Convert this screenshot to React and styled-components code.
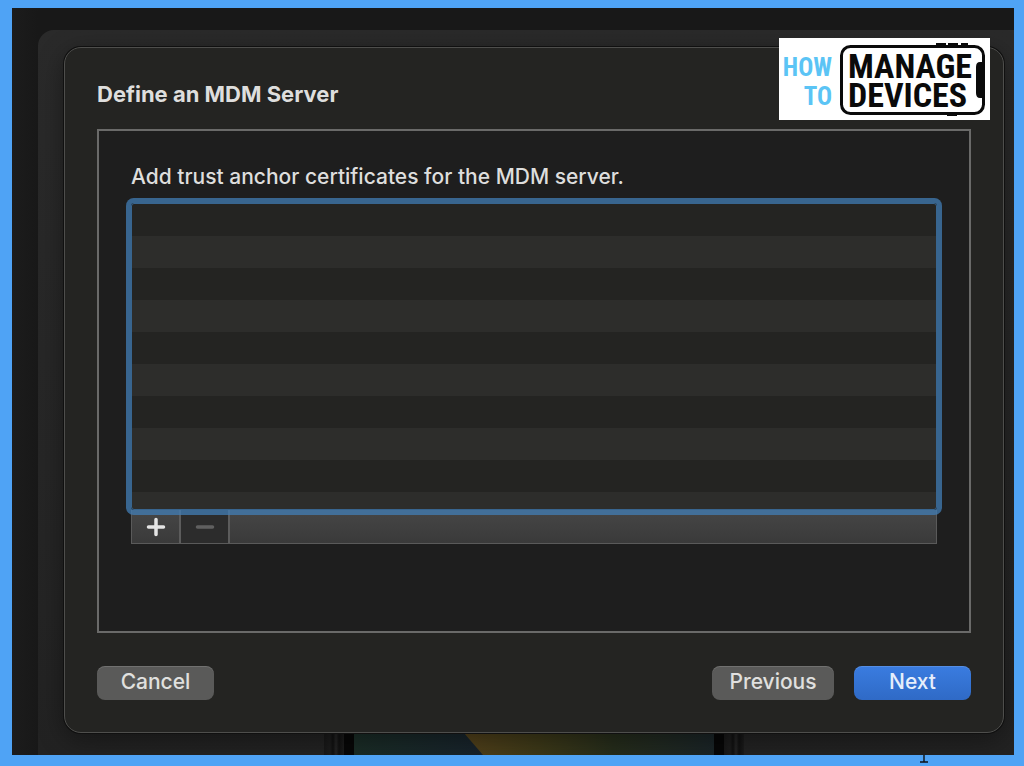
import styled, { createGlobalStyle } from "styled-components";

const GlobalStyle = createGlobalStyle`
  * {
    box-sizing: border-box;
  }
  body {
    margin: 0;
    font-family: Inter, "Liberation Sans", sans-serif;
    font-size: 21px;
    font-weight: 500;
    line-height: 28px;
    color: #dededd;
  }
`;

const Frame = styled.div`
  position: relative;
  display: flex;
  min-height: 100vh;
  padding: 8px 10px 11px 12px;
  background-color: #4fa3f5;
`;

const Desktop = styled.div`
  display: flex;
  flex: 1;
  min-width: 0;
  padding: 22px 0 0 26px;
  background: linear-gradient(90deg, #1c1c1c, #181818 26px);
  overflow: hidden;
`;

const BackWindow = styled.div`
  display: flex;
  flex: 1;
  flex-direction: column;
  min-width: 0;
  padding: 17px 10px 0 26px;
  border-top-left-radius: 16px;
  background: linear-gradient(180deg, #2a2a2a, #262626 60%, #222222);
  overflow: hidden;
`;

const Sheet = styled.main`
  position: relative;
  display: flex;
  flex: 1;
  flex-direction: column;
  padding: 32px;
  border: 1px solid #4e4e4c;
  border-radius: 17px;
  background-color: #242422;
  box-shadow: 0 0 0 1px #101010, 0 6px 26px rgba(0, 0, 0, 0.4);
`;

const Title = styled.h1`
  margin: 0 0 21px;
  font-size: 22px;
  font-weight: 700;
  line-height: 28px;
`;

const Panel = styled.section`
  display: flex;
  flex: 1;
  flex-direction: column;
  padding: 32px 32px 87px;
  border: 2px solid #6a6a69;
  background-color: #1e1e1e;
`;

const Label = styled.h2`
  margin: 0 0 12px;
  font-size: 21px;
  font-weight: 500;
  line-height: 28px;
`;

const CertificateList = styled.div`
  position: relative;
  z-index: 1;
  flex: 1;
  min-height: 160px;
  border: 1px solid #38658f;
  border-radius: 3px;
  background: repeating-linear-gradient(
    180deg,
    #242422 0 32px,
    #2d2d2b 32px 64px
  );
  outline: none;
  box-shadow: 0 0 0 5px rgba(65, 125, 181, 0.75);
`;

const ListToolbar = styled.div`
  display: flex;
  height: 34px;
  border: 1px solid #5a5a5a;
  border-top: 0;
  background: linear-gradient(180deg, #464646, #3a3a3a);
`;

const ToolButton = styled.button`
  display: flex;
  align-items: center;
  justify-content: center;
  width: 49px;
  padding: 0;
  border: 0;
  border-right: 2px solid #5c5c5c;
  background: ${(props) => (props.disabled ? "#2c2c2c" : "transparent")};
  color: ${(props) => (props.disabled ? "#606060" : "#e4e4e4")};
`;

const Actions = styled.footer`
  display: flex;
  gap: 20px;
  margin-top: 33px;
`;

const Button = styled.button`
  min-width: ${(props) => (props.$wide ? "122px" : "117px")};
  height: 34px;
  padding: 0 16px 2px;
  border: 0;
  border-radius: 8px;
  background: ${(props) =>
    props.$primary ? "linear-gradient(180deg, #3a7ce0, #2f6ac6)" : "#5a5a59"};
  box-shadow: inset 0 1px 0 rgba(255, 255, 255, 0.14);
  color: ${(props) => (props.$primary ? "#e6eefb" : "#e0e0df")};
  font: inherit;
`;

const Spacer = styled.div`
  flex: 1;
`;

const Phone = styled.div`
  display: flex;
  align-self: center;
  width: 420px;
  height: 22px;
`;

const PhoneEdge = styled.div`
  width: 20px;
  background: linear-gradient(
    90deg,
    #181818,
    #1c1c1c 30%,
    #101010 45%,
    #242424 60%,
    #111 75%,
    #1c1c1c
  );
`;

const PhoneBezel = styled.div`
  width: 10px;
  background-color: #070707;
`;

const PhoneScreen = styled.svg`
  flex: 1;
  min-width: 0;
  height: 22px;
`;

const Logo = styled.svg`
  position: absolute;
  top: 38px;
  right: 34px;
  width: 211px;
  height: 82px;
  font-family: "Roboto Condensed", "Liberation Sans Narrow", sans-serif;
  font-weight: 700;
`;

const TextCursor = styled.svg`
  position: absolute;
  right: 95px;
  bottom: 3px;
  width: 10px;
  height: 8px;
`;

function HowToLogo() {
  return (
    <Logo viewBox="0 0 211 82" role="img" aria-label="How to manage devices">
      <rect width="211" height="82" fill="#fff" />
      <g fill="#5bc4f5" fontSize="25" textAnchor="end">
        <text x="53" y="38">HOW</text>
        <text x="53" y="67">TO</text>
      </g>
      <rect
        x="62.5"
        y="8.5"
        width="142"
        height="67"
        rx="9"
        fill="none"
        stroke="#0a0a0a"
        strokeWidth="3"
      />
      <path d="M157 6h10M169 6h10M182 6h7M168 77h10" stroke="#0a0a0a" strokeWidth="2" />
      <path d="M205 24h-4q-4 0-4 5v26q0 5 4 5h4z" fill="#0a0a0a" />
      <g fill="#0a0a0a" fontSize="34">
        <text x="69" y="40">MANAGE</text>
        <text x="69" y="69">DEVICES</text>
      </g>
    </Logo>
  );
}

export default function App() {
  return (
    <>
      <GlobalStyle />
      <Frame>
        <Desktop>
          <BackWindow>
            <Sheet>
              <Title>Define an MDM Server</Title>
              <Panel>
                <Label id="certificates">
                  Add trust anchor certificates for the MDM server.
                </Label>
                <CertificateList
                  role="listbox"
                  aria-labelledby="certificates"
                  tabIndex={0}
                />
                <ListToolbar>
                  <ToolButton type="button" aria-label="Add certificate">
                    <svg width="20" height="20" viewBox="0 0 20 20">
                      <path
                        d="M10 2.5v15M2.5 10h15"
                        stroke="currentColor"
                        strokeWidth="3.5"
                        strokeLinecap="round"
                      />
                    </svg>
                  </ToolButton>
                  <ToolButton type="button" aria-label="Remove certificate" disabled>
                    <svg width="20" height="20" viewBox="0 0 20 20">
                      <path
                        d="M2.5 10h15"
                        stroke="currentColor"
                        strokeWidth="3.5"
                        strokeLinecap="round"
                      />
                    </svg>
                  </ToolButton>
                </ListToolbar>
              </Panel>
              <Actions>
                <Button type="button">Cancel</Button>
                <Spacer />
                <Button type="button" $wide>
                  Previous
                </Button>
                <Button type="button" $primary>
                  Next
                </Button>
              </Actions>
            </Sheet>
            <Phone>
              <PhoneEdge />
              <PhoneBezel />
              <PhoneScreen viewBox="0 0 360 22" preserveAspectRatio="none">
                <defs>
                  <linearGradient id="teal">
                    <stop offset="0" stopColor="#1a2c26" />
                    <stop offset="1" stopColor="#17222b" />
                  </linearGradient>
                  <linearGradient id="gold">
                    <stop offset="0" stopColor="#51401a" />
                    <stop offset="0.3" stopColor="#3c3818" />
                    <stop offset="0.6" stopColor="#252c1b" />
                    <stop offset="1" stopColor="#1a2427" />
                  </linearGradient>
                </defs>
                <rect width="130" height="22" fill="url(#teal)" />
                <path d="M110 0h250v22H129z" fill="url(#gold)" />
              </PhoneScreen>
              <PhoneBezel />
              <PhoneEdge />
            </Phone>
          </BackWindow>
        </Desktop>
        <HowToLogo />
        <TextCursor viewBox="0 0 10 8" aria-hidden="true">
          <path d="M5 0v7M1 7h8" stroke="#0c1116" strokeWidth="1.4" fill="none" />
        </TextCursor>
      </Frame>
    </>
  );
}
